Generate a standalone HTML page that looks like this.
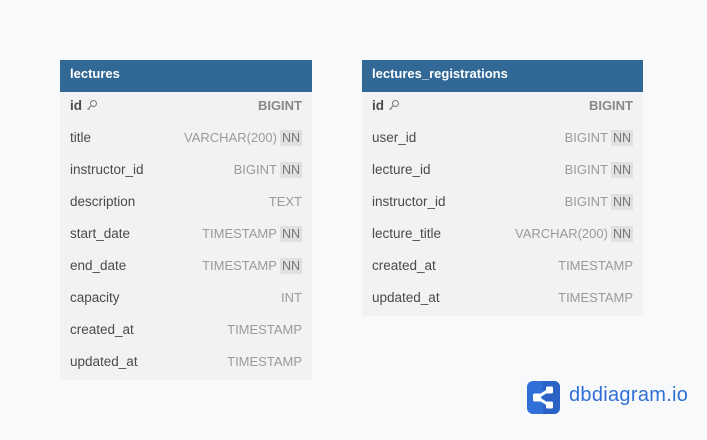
<!DOCTYPE html>
<html><head><style>
body{margin:0;width:707px;height:440px;background:#f8f9fa;font-family:"Liberation Sans",sans-serif;position:relative;overflow:hidden}
.t{position:absolute;background:#f2f2f2}
.h{height:32px;background:#316896;color:#fff;font-weight:bold;font-size:13px;line-height:28px;padding-left:10px}
.r{height:32px;line-height:32px;display:flex;justify-content:space-between;padding:0 10px;font-size:13.5px;color:#4a4a4a;position:relative;top:-2px}
.ty{color:#9a9a9a;font-size:13px}
.nn{background:#e0e0e0;color:#777;padding:1px 2px;margin-left:3px;font-size:12.5px}
.pk{font-weight:bold}
.pk .ty{font-weight:bold;color:#888}
.key{display:inline-block;width:12px;height:12px;margin-left:4px;vertical-align:-1px}
</style></head><body>
<div class="t" style="left:60px;top:60px;width:252px;height:320px">
<div class="h">lectures</div>
<div class="r pk"><span>id<svg class="key" viewBox="0 0 12 12"><circle cx="7.5" cy="4.5" r="3" fill="none" stroke="#777" stroke-width="1"/><path d="M5.3 6.7L1.5 10.5M2.5 9.5l1 1" stroke="#777" stroke-width="1" fill="none"/></svg></span><span class="ty">BIGINT</span></div>
<div class="r"><span>title</span><span class="ty">VARCHAR(200)<span class="nn">NN</span></span></div>
<div class="r"><span>instructor_id</span><span class="ty">BIGINT<span class="nn">NN</span></span></div>
<div class="r"><span>description</span><span class="ty">TEXT</span></div>
<div class="r"><span>start_date</span><span class="ty">TIMESTAMP<span class="nn">NN</span></span></div>
<div class="r"><span>end_date</span><span class="ty">TIMESTAMP<span class="nn">NN</span></span></div>
<div class="r"><span>capacity</span><span class="ty">INT</span></div>
<div class="r"><span>created_at</span><span class="ty">TIMESTAMP</span></div>
<div class="r"><span>updated_at</span><span class="ty">TIMESTAMP</span></div>
</div>
<div class="t" style="left:362px;top:60px;width:281px;height:256px">
<div class="h">lectures_registrations</div>
<div class="r pk"><span>id<svg class="key" viewBox="0 0 12 12"><circle cx="7.5" cy="4.5" r="3" fill="none" stroke="#777" stroke-width="1"/><path d="M5.3 6.7L1.5 10.5M2.5 9.5l1 1" stroke="#777" stroke-width="1" fill="none"/></svg></span><span class="ty">BIGINT</span></div>
<div class="r"><span>user_id</span><span class="ty">BIGINT<span class="nn">NN</span></span></div>
<div class="r"><span>lecture_id</span><span class="ty">BIGINT<span class="nn">NN</span></span></div>
<div class="r"><span>instructor_id</span><span class="ty">BIGINT<span class="nn">NN</span></span></div>
<div class="r"><span>lecture_title</span><span class="ty">VARCHAR(200)<span class="nn">NN</span></span></div>
<div class="r"><span>created_at</span><span class="ty">TIMESTAMP</span></div>
<div class="r"><span>updated_at</span><span class="ty">TIMESTAMP</span></div>
</div>
<svg style="position:absolute;left:527px;top:381px" width="33" height="33" viewBox="0 0 33 33">
<rect width="33" height="33" rx="6" fill="#2f6fd8"/>
<path d="M16 0h11a6 6 0 0 1 6 6v21a6 6 0 0 1-6 6H16z" fill="#2a62c6"/>
<path d="M10 16.5L22 9M10 16.5L22 24" stroke="#fff" stroke-width="3"/>
<rect x="6" y="12.5" width="8" height="8" rx="1.5" fill="#fff"/>
<rect x="19" y="5.5" width="7" height="7" rx="1.5" fill="#fff"/>
<rect x="19" y="20.5" width="7" height="7" rx="1.5" fill="#fff"/>
</svg>
<div style="position:absolute;left:569px;top:384px;font-size:20px;color:#2f6fd8;letter-spacing:0.3px">dbdiagram.io</div>
</body></html>
